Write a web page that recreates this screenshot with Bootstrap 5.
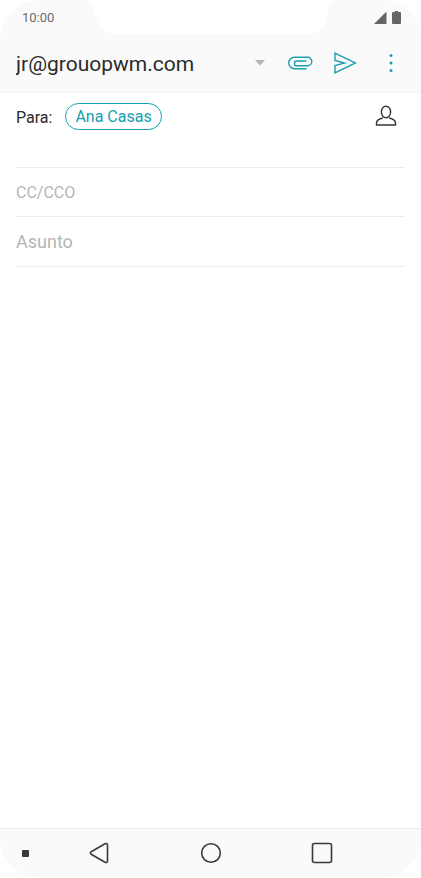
<!DOCTYPE html>
<html lang="es">
<head>
<meta charset="utf-8">
<meta name="viewport" content="width=device-width, initial-scale=1">
<title>Nuevo correo</title>
<link href="https://cdn.jsdelivr.net/npm/bootstrap@5.3.0/dist/css/bootstrap.min.css" rel="stylesheet">
<style>
body { font-family: Roboto, "Noto Sans", sans-serif; color: #2b2b2b; background: #fff; }
svg { display: block; flex: none; }
.screen { background: #fff; }
.top-area { background: #fafafa; border-radius: 40px 40px 0 0; border-bottom: 1px solid #f3f3f3; }
.status-bar { height: 34px; }
.status-side { flex: 1 1 0; min-width: 0; }
.clock { font-size: 13px; line-height: 36px; padding-left: 22px; color: #6b6b6b; }
.signals { padding: 11px 20px 0 0; gap: 5px; }
.compose-bar { height: 58px; padding: 0 8px 0 12px; }
.account { font-size: 21px; line-height: 28px; color: #2b2b2b; appearance: none; width: 100%; padding: 2px 16px 0 4px; }
.account-box { margin-right: 12px; }
.caret { right: 0; top: 12px; pointer-events: none; }
.icon-btn { height: 40px; width: 45px; color: #1b9fb0; }
.field-row { margin: 0 16px; border-bottom: 1px solid #ececec; }
.to-row { height: 75px; padding: 10px 0; }
.to-row label { font-size: 16px; line-height: 30px; }
.chip { font-size: 16px; line-height: 25px; color: #12a0b2; border: 1px solid #12a0b2; padding: 0 9px; margin-left: 13px; }
.contact-btn { width: 38px; height: 26px; color: #333; }
.line-input { background: transparent; color: #2b2b2b; }
.line-input::placeholder { color: #b5b5b5; opacity: 1; }
.cc { font-size: 16px; height: 48px; }
.subject { font-size: 18px; height: 49px; }
.message { resize: none; padding: 16px; }
.nav-area { background: #fafafa; border-top: 1px solid #ececec; border-radius: 0 0 40px 40px; height: 50px; padding-bottom: 1px; }
.nav-edge { width: 43px; }
.nav-btn { flex: 1 1 0; }
button:focus-visible, select:focus-visible { outline: 2px solid #1b9fb0; }
.plain { outline: 0; }
</style>
<script src="https://cdn.jsdelivr.net/npm/bootstrap@5.3.0/dist/js/bootstrap.bundle.min.js" defer></script>
</head>
<body>
<form class="screen d-flex flex-column min-vh-100" onsubmit="return false">
  <header class="top-area">
    <div class="status-bar d-flex">
      <div class="status-side clock">10:00</div>
      <svg width="256" height="34" viewBox="0 0 256 34" aria-hidden="true"><path d="M0 0C8 1 10 5 11 13C13 26 20 34 32 34H223C235 34 242 26 243 13C244 5 248 1 256 0Z" fill="#fff"/></svg>
      <div class="status-side signals d-flex justify-content-end">
        <svg width="13" height="13" viewBox="0 0 13 13" role="img" aria-label="Cobertura"><path d="M12.5 .5V13H0Z" fill="#666"/></svg>
        <svg width="9" height="13" viewBox="0 0 9 13" role="img" aria-label="Batería"><path d="M3 0H6V1H8Q9 1 9 2V12Q9 13 8 13H1Q0 13 0 12V2Q0 1 1 1H3Z" fill="#666"/></svg>
      </div>
    </div>
    <div class="compose-bar d-flex align-items-center">
      <div class="account-box position-relative flex-grow-1">
        <select class="account border-0 bg-transparent" aria-label="Cuenta"><option>jr@grouopwm.com</option></select>
        <svg class="caret position-absolute" width="12" height="6" viewBox="0 0 12 6" aria-hidden="true"><path d="M1 0H11L6 5.500Z" fill="#b5b5b5"/></svg>
      </div>
      <button type="button" class="icon-btn btn border-0 p-0 d-flex align-items-center justify-content-center" aria-label="Adjuntar">
        <svg width="25" height="14" viewBox="0 0 25 14" fill="none" stroke="currentColor" stroke-width="1.400"><path d="M18.500 12.800H6.500A5.800 5.800 0 0 1 6.500 1.200H19.500A4.300 4.300 0 0 1 19.500 9.800H8.800A2.300 2.300 0 0 1 8.800 5H18.500"/></svg>
      </button>
      <button type="button" class="icon-btn btn border-0 p-0 d-flex align-items-center justify-content-center" aria-label="Enviar">
        <svg width="23" height="22" viewBox="0 0 23 22" fill="none" stroke="currentColor" stroke-width="1.400"><path d="M1 1.200L21.500 11L1 20.800V13.500L10.500 11L1 8.500Z"/></svg>
      </button>
      <button type="button" class="icon-btn btn border-0 p-0 d-flex align-items-center justify-content-center" aria-label="Más opciones">
        <svg width="4" height="20" viewBox="0 0 4 20" fill="currentColor"><circle cx="2" cy="2.500" r="1.500"/><circle cx="2" cy="10" r="1.500"/><circle cx="2" cy="17.500" r="1.500"/></svg>
      </button>
    </div>
  </header>

  <main class="flex-grow-1 d-flex flex-column">
    <div class="field-row to-row d-flex align-items-start">
      <label for="recipient">Para:</label>
      <button type="button" id="recipient" class="chip rounded-pill bg-transparent">Ana Casas</button>
      <button type="button" class="contact-btn btn border-0 p-0 ms-auto d-flex align-items-center justify-content-center" aria-label="Contactos">
        <svg width="22" height="22" viewBox="0 0 22 22" fill="none" stroke="currentColor" stroke-width="1.400"><ellipse cx="11" cy="7" rx="4.600" ry="5.800"/><path d="M7.800 13C3.500 14 1.500 15.500 1.500 18V20H20.500V18C20.500 15.500 18.500 14 14.200 13"/></svg>
      </button>
    </div>
    <div class="field-row"><input type="text" class="line-input cc plain border-0 p-0 w-100 d-block" placeholder="CC/CCO" aria-label="CC/CCO"></div>
    <div class="field-row"><input type="text" class="line-input subject plain border-0 p-0 w-100 d-block" placeholder="Asunto" aria-label="Asunto"></div>
    <textarea class="message plain border-0 flex-grow-1 w-100" aria-label="Mensaje"></textarea>
  </main>

  <nav class="nav-area d-flex align-items-stretch" aria-label="Sistema">
    <button type="button" class="nav-edge btn border-0 p-0 d-flex align-items-center justify-content-center" aria-label="Ocultar barra"><svg class="ms-2" width="7" height="7"><rect width="7" height="7" rx="1" fill="#3a3a3a"/></svg></button>
    <button type="button" class="nav-btn btn border-0 p-0 d-flex align-items-center justify-content-center" aria-label="Atrás"><svg width="20" height="22" viewBox="0 0 20 22" fill="none" stroke="#3a3a3a" stroke-width="1.600" stroke-linejoin="round"><path d="M2.200 9.700L16 1.800Q18.500 1 18.500 3V19Q18.500 21 16 20.200L2.200 12.300Q.500 11 2.200 9.700Z"/></svg></button>
    <button type="button" class="nav-btn btn border-0 p-0 d-flex align-items-center justify-content-center" aria-label="Inicio"><svg width="22" height="22"><circle cx="11" cy="11" r="9.300" fill="none" stroke="#3a3a3a" stroke-width="1.600"/></svg></button>
    <button type="button" class="nav-btn btn border-0 p-0 d-flex align-items-center justify-content-center" aria-label="Recientes"><svg width="22" height="22"><rect x="1.500" y="1.500" width="19" height="19" rx="2" fill="none" stroke="#3a3a3a" stroke-width="1.600"/></svg></button>
    <span class="nav-edge"></span>
  </nav>
</form>
</body>
</html>
